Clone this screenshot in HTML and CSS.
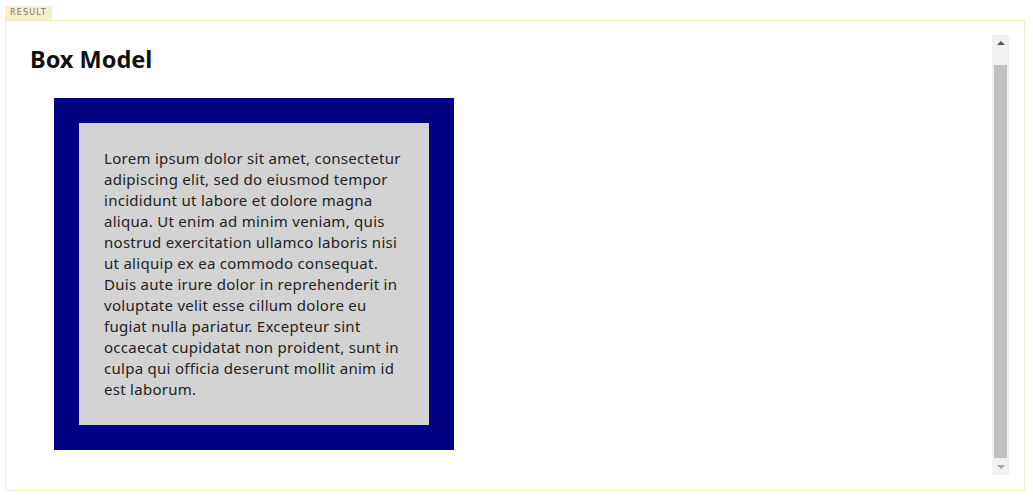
FILE: index.html
```html
<!DOCTYPE html>
<html>
<head>
<meta charset="utf-8">
<link rel="stylesheet" href="styles.css">
</head>
<body>
<div class="tab">RESULT</div>
<div class="frame">
  <div class="content">
    <h1 class="title">Box Model</h1>
    <div class="box">
      <p class="text">Lorem ipsum dolor sit amet, consectetur adipiscing elit, sed do eiusmod tempor incididunt ut labore et dolore magna aliqua. Ut enim ad minim veniam, quis nostrud exercitation ullamco laboris nisi ut aliquip ex ea commodo consequat. Duis aute irure dolor in reprehenderit in voluptate velit esse cillum dolore eu fugiat nulla pariatur. Excepteur sint occaecat cupidatat non proident, sunt in culpa qui officia deserunt mollit anim id est laborum.</p>
    </div>
  </div>
  <div class="scrollbar">
    <div class="arrow up"></div>
    <div class="thumb"></div>
    <div class="arrow down"></div>
  </div>
</div>
</body>
</html>
```
FILE: styles.css
```css
html, body {
  margin: 0;
  padding: 0;
  background: #fff;
}
body {
  padding: 6px 0 0 5px;
  font-family: "Noto Sans", sans-serif;
}
.tab {
  width: 47px;
  height: 14px;
  background: #f6f1cc;
  color: #7c7466;
  font-family: "DejaVu Sans", sans-serif;
  font-size: 8px;
  letter-spacing: 1.2px;
  line-height: 14px;
  text-align: center;
  box-sizing: border-box;
}
.frame {
  width: 1020px;
  height: 471px;
  box-sizing: border-box;
  border: 1px solid #f3efc4;
  display: flex;
  justify-content: space-between;
}
.content {
  padding: 22px 0 0 24px;
}
.title {
  margin: 0 0 23px 0;
  font-size: 23.5px;
  line-height: 32px;
  font-weight: 700;
  color: #111;
}
.box {
  margin-left: 24px;
  width: 300px;
  padding: 25px;
  border: 25px solid #000080;
  background: #d3d3d3;
}
.text {
  margin: 0;
  font-size: 15px;
  letter-spacing: 0.28px;
  line-height: 21px;
  color: #222;
}
.scrollbar {
  margin: 14px 15px 15px 0;
  width: 17px;
  background: #f1f1f1;
  display: flex;
  flex-direction: column;
  align-items: center;
}
.arrow {
  width: 0;
  height: 0;
  border-left: 4px solid transparent;
  border-right: 4px solid transparent;
}
.arrow.up {
  margin: 6px 0 7px;
  border-bottom: 4px solid #505050;
}
.arrow.down {
  margin: 7px 0 6px;
  border-top: 4px solid #a3a3a3;
}
.thumb {
  flex: 1;
  margin-top: 13px;
  width: 13px;
  background: #c1c1c1;
}
```
